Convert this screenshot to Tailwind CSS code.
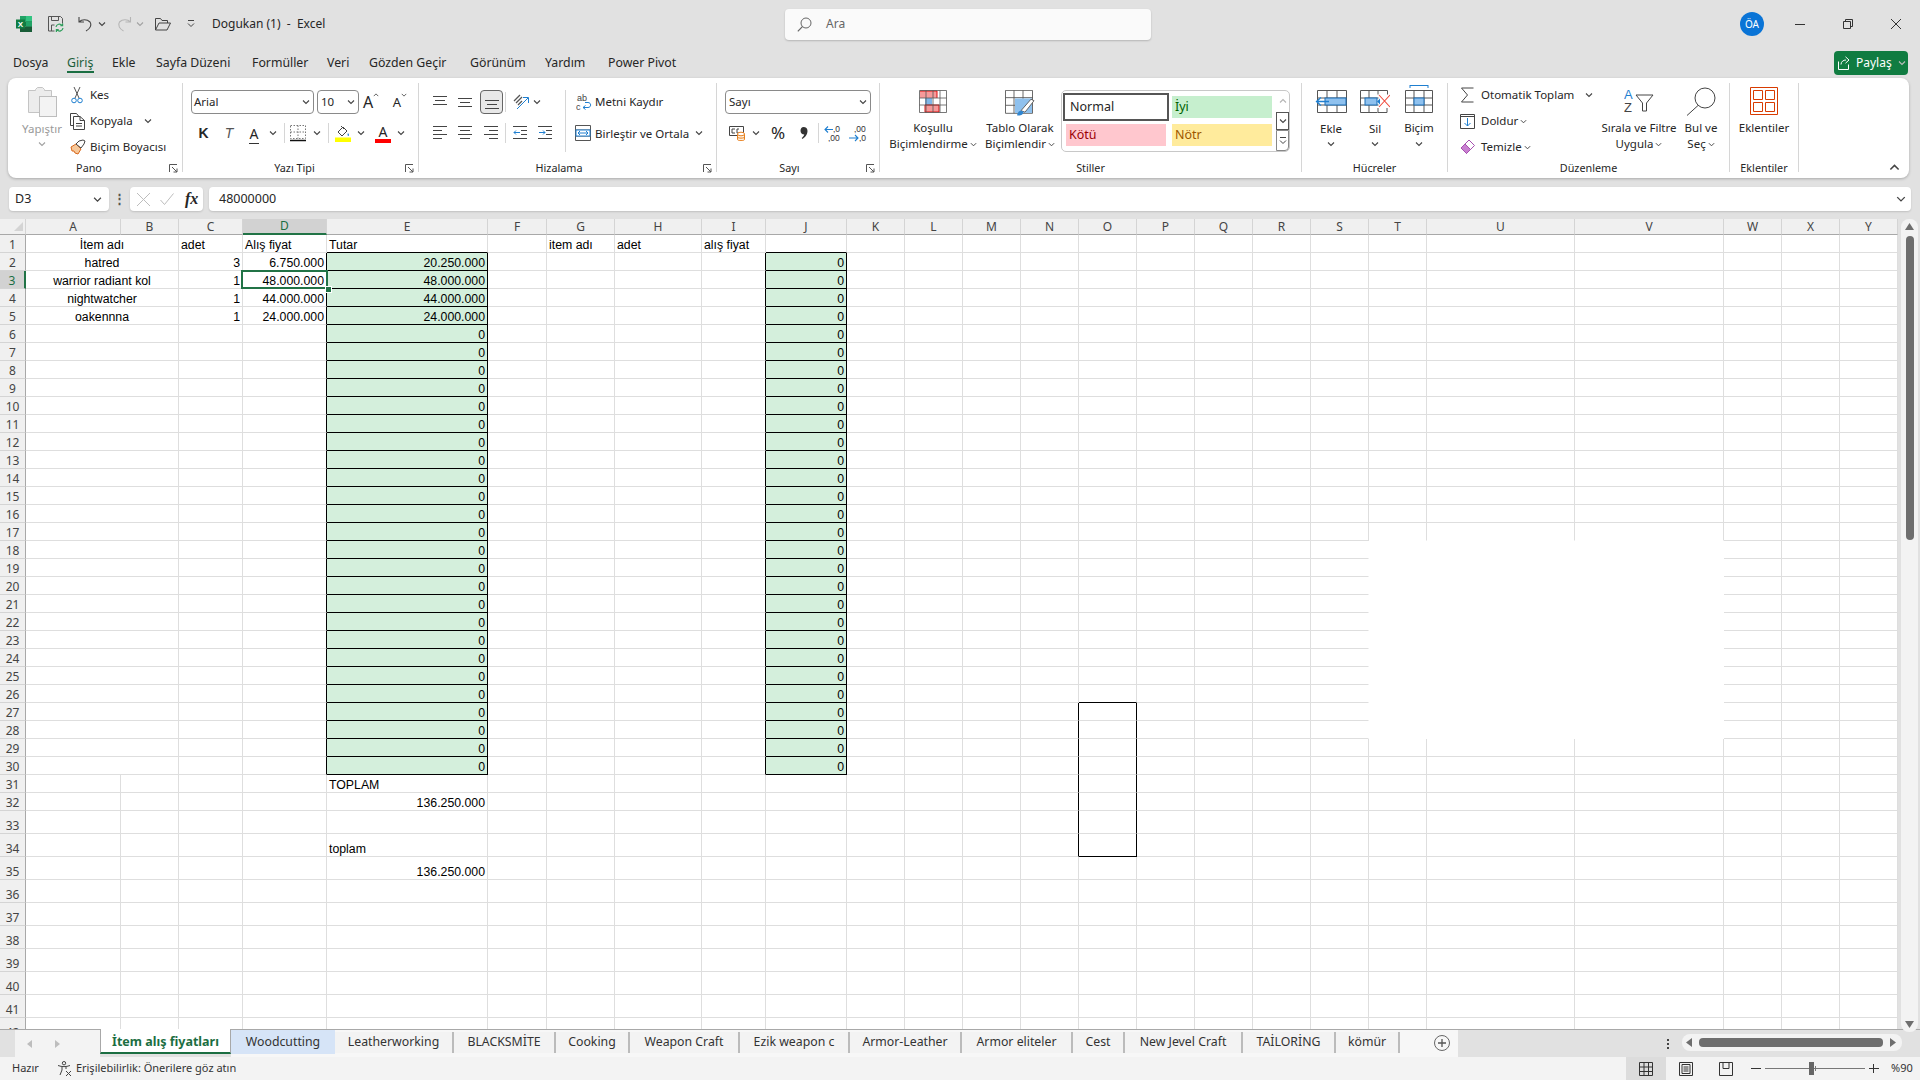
<!DOCTYPE html>
<html lang="tr">
<head>
<meta charset="UTF-8">
<title>Dogukan (1) - Excel</title>
<script src="https://cdn.jsdelivr.net/npm/@tailwindcss/browser@4"></script>
</head>
<body class="w-[1920px] h-[1080px] overflow-hidden bg-[#e1e1e1] text-[#262626] text-[12px] font-['Noto_Sans',sans-serif]">

<!-- shared icon parts -->
<svg class="hidden">
  <symbol id="chev" viewBox="0 0 8 8"><path d="M1 2.5 4 5.5 7 2.5" fill="none" stroke="#444" stroke-width="1.1"/></symbol>
  <symbol id="launch" viewBox="0 0 9 9"><path d="M.5 8V.5H8M3 3l5 5M8 4.5V8H4.5" fill="none" stroke="#555"/></symbol>
</svg>

<!-- title bar -->
<div class="h-[48px] flex items-center">
  <svg class="ml-[16px] w-[16px] h-[16px]" viewBox="0 0 16 16">
    <rect x="4" y="0" width="12" height="5.4" fill="#21a366"/><rect x="10" y="0" width="6" height="5.4" fill="#33c481"/>
    <rect x="4" y="5.3" width="12" height="5.4" fill="#107c41"/><rect x="10" y="5.3" width="6" height="5.4" fill="#21a366"/>
    <rect x="4" y="10.6" width="12" height="5.4" fill="#185c37"/><rect x="0" y="3.5" width="9" height="9" fill="#107c41"/>
    <text x="4.5" y="10.8" text-anchor="middle" font-size="8" font-weight="700" fill="#fff" font-family="Liberation Sans">X</text>
  </svg>
  <svg class="ml-[16px] w-[16px] h-[16px]" viewBox="0 0 16 16">
    <path d="M.5.5h12l2 2v5M.5.5v14.5h6M3.5.5v4h7v-4M3.5 15V9h3" fill="none" stroke="#555"/>
    <path d="M8 11a3.4 3.4 0 0 1 6-1.6M15 12a3.4 3.4 0 0 1-6 1.8M14.6 7.5v2.2h-2.2M8.4 16v-2.3h2.3" fill="none" stroke="#2e9e5b" stroke-width="1.2"/>
  </svg>
  <svg class="ml-[14px] w-[14px] h-[16px]" viewBox="0 0 14 16"><path d="M1 1v5h5M1 6c3-3 8-3 11 0 2 3 0 7-4 9" fill="none" stroke="#444" stroke-width="1.1"/></svg>
  <svg class="ml-[6px] w-[8px] h-[8px]"><use href="#chev"/></svg>
  <svg class="ml-[11px] w-[15px] h-[16px]" viewBox="0 0 14 16"><path d="M13 1v5H8M13 6C10 3 5 3 2 6c-2 3 0 7 4 9" fill="none" stroke="#b5b5b5" stroke-width="1.1"/></svg>
  <svg class="ml-[4px] w-[8px] h-[8px] opacity-40"><use href="#chev"/></svg>
  <svg class="ml-[11px] w-[16px] h-[14px]" viewBox="0 0 16 14"><path d="M.5 13V1.5h5l1.5 2h5.500v2.500M.5 13h11.500l3.500-7H4L.5 13" fill="none" stroke="#444"/></svg>
  <svg class="ml-[16px] w-[8px] h-[10px]" viewBox="0 0 8 10"><path d="M1 1.500h6M1 4.500l3 3 3-3" fill="none" stroke="#444"/></svg>
  <div class="ml-[17px] w-[108px] whitespace-pre text-[12px]">Dogukan (1)  -  Excel</div>
  <div class="ml-[465px] w-[366px] h-[31px] bg-[#fafafa] rounded-[4px] shadow-[0_1px_2px_rgba(0,0,0,0.2)] flex items-center text-[#666]">
    <svg class="ml-[12px] w-[15px] h-[15px]" viewBox="0 0 15 15"><circle cx="9" cy="6" r="5" fill="none" stroke="#666"/><path d="M5.500 9.500.8 14.300" stroke="#666" stroke-width="1.100"/></svg>
    <span class="ml-[14px]">Ara</span>
  </div>
  <div class="ml-[589px] w-[24px] h-[24px] rounded-full bg-[#0a74d6] text-white text-[10px] flex items-center justify-center">ÖA</div>
  <svg class="ml-[31px] w-[10px] h-[10px]" viewBox="0 0 10 10"><path d="M0 5.500h10" stroke="#333"/></svg>
  <svg class="ml-[38px] w-[10px] h-[10px]" viewBox="0 0 10 10"><path d="M.5 2.500h7v7h-7zM2.500 2.500V.5h7v7H7.500" fill="none" stroke="#333"/></svg>
  <svg class="ml-[38px] w-[10px] h-[10px]" viewBox="0 0 10 10"><path d="M0 0l10 10M10 0 0 10" stroke="#333"/></svg>
</div>

<!-- menu row -->
<div class="h-[30px] flex items-center pl-[13px] text-[12.3px]">
  <div class="w-[54px] pt-[1px]">Dosya</div>
  <div class="w-[45px] pt-[1px] relative text-[#1b5e3a]">Giriş<div class="absolute left-0 top-[18px] w-[27px] h-[2px] bg-[#1b6e42]"></div></div>
  <div class="w-[44px] pt-[1px]">Ekle</div>
  <div class="w-[96px] pt-[1px]">Sayfa Düzeni</div>
  <div class="w-[75px] pt-[1px]">Formüller</div>
  <div class="w-[42px] pt-[1px]">Veri</div>
  <div class="w-[101px] pt-[1px]">Gözden Geçir</div>
  <div class="w-[75px] pt-[1px]">Görünüm</div>
  <div class="w-[63px] pt-[1px]">Yardım</div>
  <div class="w-[226px] pt-[1px]">Power Pivot</div>
  <div class="ml-[1000px] w-[74px] h-[24px] rounded-[4px] bg-[#107c41] text-white flex items-center">
    <svg class="ml-[4px] w-[14px] h-[14px]" viewBox="0 0 14 14"><path d="M.5 5.500v8h10v-5M3 8.500c0-3 2.500-4.500 5-4.500M7.500.8 11 4 7.500 7.200" fill="none" stroke="#fff"/></svg>
    <span class="ml-[4px] text-[12px]">Paylaş</span>
    <svg class="ml-[6px] w-[8px] h-[8px] invert"><use href="#chev"/></svg>
  </div>
</div>

<!-- ribbon -->
<div class="ml-[8px] w-[1901px] h-[100px] bg-white rounded-[8px] shadow-[0_1px_3px_rgba(0,0,0,0.25)] flex pt-[5px] text-[11.5px]">

  <!-- Pano -->
  <div class="w-[175px] h-[89px] border-r border-[#d6d6d6]">
    <div class="h-[79px] flex">
      <div class="w-[62px] pl-[6px] flex flex-col items-center text-[#9a9a9a]">
        <svg class="mt-[4px] w-[29px] h-[30px]" viewBox="0 0 29 30"><path d="M.5 3.500h7v-1l2-2h5l2 2v1h7v6H11.500v16H.5z" fill="#ececec" stroke="#c4c4c4"/><rect x="11.500" y="9.500" width="17" height="20" fill="#f3f3f3" stroke="#bdbdbd"/></svg>
        <div class="mt-[4px] leading-[16px]">Yapıştır</div>
        <svg class="mt-[3px] w-[8px] h-[8px] opacity-50"><use href="#chev"/></svg>
      </div>
      <div class="-mt-[1px] flex flex-col">
        <div class="h-[26px] flex items-center">
          <svg class="w-[14px] h-[18px]" viewBox="0 0 14 18"><path d="M4 1l5 11M10 1 5 12" fill="none" stroke="#555"/><circle cx="4" cy="14.500" r="2.300" fill="none" stroke="#1f7fd0"/><circle cx="10" cy="14.500" r="2.300" fill="none" stroke="#1f7fd0"/></svg>
          <span class="ml-[6px]">Kes</span>
        </div>
        <div class="h-[26px] flex items-center">
          <svg class="w-[15px] h-[17px]" viewBox="0 0 15 17"><path d="M3.500 12.500H.5V.5h6l2 2.500M3.500 3.500h6.500l4.500 4v9h-11zM10 3.500v4h4.500M6 10.500h6M6 13h6" fill="none" stroke="#444"/></svg>
          <span class="ml-[5px]">Kopyala</span>
          <svg class="ml-[11px] w-[8px] h-[8px]"><use href="#chev"/></svg>
        </div>
        <div class="h-[26px] flex items-center">
          <svg class="w-[16px] h-[16px]" viewBox="0 0 16 16"><path d="M1 8l5-3 5 5-3 5-3-1-1-2-2 0z" fill="#f7c89a" stroke="#d9691c"/><path d="M6 5l3-3 4-1 2 1-1 3-3 4z" fill="#fff" stroke="#444"/></svg>
          <span class="ml-[4px] whitespace-nowrap">Biçim Boyacısı</span>
        </div>
      </div>
    </div>
    <div class="h-[12px] leading-[12px] text-center text-[10.8px] relative pr-[12px]">Pano<svg class="absolute right-[4px] top-[2px] w-[9px] h-[9px]"><use href="#launch"/></svg></div>
  </div>

  <!-- Yazı Tipi -->
  <div class="w-[236px] h-[89px] border-r border-[#d6d6d6]">
    <div class="h-[79px] pt-[7px] flex flex-col gap-[7px]">
      <div class="h-[24px] flex items-center pl-[8px]">
        <div class="w-[123px] h-[24px] border border-[#8a8a8a] rounded-[4px] flex items-center justify-between px-[2px]"><span>Arial</span><svg class="mr-[1px] w-[8px] h-[8px]"><use href="#chev"/></svg></div>
        <div class="ml-[3px] w-[42px] h-[24px] border border-[#8a8a8a] rounded-[4px] flex items-center justify-between px-[3px]"><span>10</span><svg class="w-[8px] h-[8px]"><use href="#chev"/></svg></div>
        <div class="ml-[3px] w-[18px] flex items-start justify-center text-[16px] leading-[20px]">A<svg class="w-[6px] h-[6px] rotate-180"><use href="#chev"/></svg></div>
        <div class="ml-[11px] w-[18px] flex items-start justify-center text-[13px] leading-[20px]">A<svg class="w-[6px] h-[6px]"><use href="#chev"/></svg></div>
      </div>
      <div class="h-[24px] flex items-center pl-[8px]">
        <div class="w-[25px] text-center font-bold text-[14px] font-['Liberation_Sans',sans-serif]">K</div>
        <div class="w-[26px] text-center italic text-[14px] text-[#555] font-['Liberation_Sans',sans-serif]">T</div>
        <div class="w-[24px] text-center text-[14px] leading-[17px]"><span class="border-b border-[#333] px-[1px]">A</span></div>
        <svg class="ml-[3px] mr-[3px] w-[8px] h-[8px]"><use href="#chev"/></svg>
        <div class="ml-[4px] w-[1px] h-[20px] bg-[#d6d6d6]"></div>
        <svg class="ml-[5px] mr-[5px] w-[16px] h-[17px]" viewBox="0 0 16 17"><path d="M.5.5h15v13H.5zM8 .5v13M.5 7h15" fill="none" stroke="#777" stroke-dasharray="1.500 1.500"/><path d="M0 15.500h16" stroke="#111" stroke-width="1.500"/></svg>
        <svg class="ml-[2px] mr-[2px] w-[8px] h-[8px]"><use href="#chev"/></svg>
        <div class="ml-[5px] w-[1px] h-[20px] bg-[#d6d6d6]"></div>
        <svg class="ml-[6px] mr-[6px] w-[16px] h-[17px]" viewBox="0 0 16 17"><path d="M3 7l5-5 4 4-5 5zM6 1l3 3" fill="none" stroke="#444"/><path d="M13 8c1 1.500 1.500 2 .5 3-1 0-1.300-1.500-.5-3" fill="#1f7fd0"/><rect x="0" y="12.500" width="16" height="4.500" fill="#ffff00"/></svg>
        <svg class="mr-[1px] w-[8px] h-[8px]"><use href="#chev"/></svg>
        <div class="ml-[5px] w-[24px] flex flex-col items-center"><span class="text-[14px] leading-[15px]">A</span><div class="w-[16px] h-[4px] bg-[#ff0000]"></div></div>
        <svg class="ml-[2px] w-[8px] h-[8px]"><use href="#chev"/></svg>
      </div>
    </div>
    <div class="h-[12px] leading-[12px] text-center text-[10.8px] relative pr-[12px]">Yazı Tipi<svg class="absolute right-[4px] top-[2px] w-[9px] h-[9px]"><use href="#launch"/></svg></div>
  </div>

  <!-- Hizalama -->
  <div class="w-[298px] h-[89px] border-r border-[#d6d6d6]">
    <div class="h-[79px] pt-[7px] flex flex-col gap-[7px]">
      <div class="h-[24px] flex items-center pl-[9px]">
        <div class="w-[24px] flex justify-center"><svg class="w-[14px] h-[12px]" viewBox="0 0 14 12"><path d="M0 .5h14M2 4.500h10M0 8.500h14" stroke="#444"/></svg></div>
        <div class="ml-[1px] w-[24px] flex justify-center"><svg class="w-[14px] h-[12px]" viewBox="0 0 14 12"><path d="M0 2.500h14M2 6.500h10M0 10.500h14" stroke="#444"/></svg></div>
        <div class="ml-[3px] w-[23px] h-[24px] border border-[#666] bg-[#e8e8e8] rounded-[4px] flex items-center justify-center"><svg class="w-[14px] h-[14px]" viewBox="0 0 14 14"><path d="M0 5.500h14M2 9.500h10M0 13.500h14" stroke="#444"/></svg></div>
        <div class="ml-[2px] w-[1px] h-[20px] bg-[#d6d6d6]"></div>
        <div class="ml-[3px] w-[24px] flex justify-center"><svg class="w-[17px] h-[17px]" viewBox="0 0 17 17"><path d="M1 7l6-6M3 9l6-6M5 11l4-4" fill="none" stroke="#555" stroke-width="1.300"/><path d="M4 15 15 4M10 3.500h5.500V9" fill="none" stroke="#1f7fd0"/></svg></div>
        <svg class="w-[8px] h-[8px]"><use href="#chev"/></svg>
        <div class="ml-[24px] w-[1px] h-[62px] self-start bg-[#d6d6d6]"></div>
        <svg class="ml-[10px] w-[16px] h-[18px]" viewBox="0 0 16 18"><text x="1" y="8" font-size="9" fill="#444" font-family="Liberation Sans">ab</text><text x="0" y="17" font-size="9" fill="#444" font-family="Liberation Sans">c</text><path d="M7 14.500h5c3.500 0 3.500-5 0-5H9M9.500 12.500l-2.500 2 2.500 2" fill="none" stroke="#1f7fd0"/></svg>
        <span class="ml-[3px] whitespace-nowrap">Metni Kaydır</span>
      </div>
      <div class="h-[24px] flex items-center pl-[9px]">
        <div class="w-[24px] flex justify-center"><svg class="w-[14px] h-[14px]" viewBox="0 0 14 14"><path d="M0 .5h14M0 4.500h9M0 8.500h14M0 12.500h9" stroke="#444"/></svg></div>
        <div class="ml-[1px] w-[24px] flex justify-center"><svg class="w-[14px] h-[14px]" viewBox="0 0 14 14"><path d="M0 .5h14M2 4.500h10M0 8.500h14M2 12.500h10" stroke="#444"/></svg></div>
        <div class="ml-[2px] w-[24px] flex justify-center"><svg class="w-[14px] h-[14px]" viewBox="0 0 14 14"><path d="M0 .5h14M5 4.500h9M0 8.500h14M5 12.500h9" stroke="#444"/></svg></div>
        <div class="ml-[2px] w-[1px] h-[20px] bg-[#d6d6d6]"></div>
        <div class="ml-[3px] w-[22px] flex justify-center"><svg class="w-[14px] h-[14px]" viewBox="0 0 14 14"><path d="M0 .5h14M8 4.500h6M8 8.500h6M0 12.500h14" stroke="#444"/><path d="M7 6.500H1M3 4.500l-2 2 2 2" fill="none" stroke="#1f7fd0"/></svg></div>
        <div class="ml-[3px] w-[22px] flex justify-center"><svg class="w-[14px] h-[14px]" viewBox="0 0 14 14"><path d="M0 .5h14M8 4.500h6M8 8.500h6M0 12.500h14" stroke="#444"/><path d="M1 6.500h6M5 4.500l2 2-2 2" fill="none" stroke="#1f7fd0"/></svg></div>
        <div class="ml-[9px] w-[1px] h-[20px] invisible"></div>
        <svg class="ml-[9px] w-[16px] h-[16px]" viewBox="0 0 16 16"><path d="M.5.5h15v15H.5zM.5 5h15M.5 11h15" fill="none" stroke="#555"/><rect x="1" y="5" width="14" height="6" fill="#fff" stroke="#1f7fd0"/><path d="M3 8h10M5 6l-2 2 2 2M11 6l2 2-2 2" fill="none" stroke="#1f7fd0"/></svg>
        <span class="ml-[4px] pt-[2px] w-[100px] whitespace-nowrap">Birleştir ve Ortala</span>
        <svg class="w-[8px] h-[8px]"><use href="#chev"/></svg>
      </div>
    </div>
    <div class="h-[12px] leading-[12px] text-center text-[10.8px] relative pr-[17px]">Hizalama<svg class="absolute right-[4px] top-[2px] w-[9px] h-[9px]"><use href="#launch"/></svg></div>
  </div>

  <!-- Sayı -->
  <div class="w-[163px] h-[89px] border-r border-[#d6d6d6]">
    <div class="h-[79px] pt-[7px] flex flex-col gap-[7px]">
      <div class="h-[24px] flex items-center pl-[8px]">
        <div class="w-[146px] h-[24px] border border-[#8a8a8a] rounded-[4px] flex items-center justify-between px-[3px]"><span>Sayı</span><svg class="w-[8px] h-[8px]"><use href="#chev"/></svg></div>
      </div>
      <div class="h-[24px] flex items-center pl-[12px]">
        <svg class="w-[16px] h-[16px]" viewBox="0 0 16 16"><path d="M.5 1.500h14v9H.5z" fill="none" stroke="#444"/><path d="M6 4H3v4h3M10 4H8v4h2" fill="none" stroke="#444"/><path d="M8.500 9v5.500c0 1.500 7 1.500 7 0V9z" fill="#fdf0e0" stroke="#e8811f"/><ellipse cx="12" cy="9" rx="3.500" ry="1.800" fill="#fff" stroke="#e8811f"/><path d="M8.500 12c0 1.500 7 1.500 7 0" fill="none" stroke="#e8811f"/></svg>
        <svg class="ml-[7px] w-[8px] h-[8px]"><use href="#chev"/></svg>
        <div class="ml-[8px] w-[20px] text-center text-[17px] leading-[20px]">%</div>
        <svg class="ml-[10px] w-[12px] h-[16px]" viewBox="0 0 12 16"><path d="M5.500 2c2.500 0 4 1.500 4 4 0 3.500-2.500 6.500-5 8l-.8-1c1.300-1 2.300-2.200 2.600-3.500C4 9.500 2.500 8 2.500 5.800 2.500 3.500 3.800 2 5.500 2z" fill="#333"/></svg>
        <div class="ml-[8px] w-[1px] h-[20px] bg-[#d6d6d6]"></div>
        <svg class="ml-[5px] w-[18px] h-[18px]" viewBox="0 0 18 18"><text x="9" y="8" font-size="8.500" fill="#333" font-family="Liberation Sans">,0</text><text x="4" y="17" font-size="8.500" fill="#333" font-family="Liberation Sans">,00</text><path d="M9 5.500H1M4 2.500 1 5.500l3 3" fill="none" stroke="#1f7fd0" stroke-width="1.100"/></svg>
        <svg class="ml-[7px] w-[18px] h-[18px]" viewBox="0 0 18 18"><text x="5" y="8" font-size="8.500" fill="#333" font-family="Liberation Sans">,00</text><text x="10" y="17" font-size="8.500" fill="#333" font-family="Liberation Sans">,0</text><path d="M0 14h9M6 11l3 3-3 3" fill="none" stroke="#1f7fd0" stroke-width="1.100"/></svg>
      </div>
    </div>
    <div class="h-[12px] leading-[12px] text-center text-[10.8px] relative pr-[17px]">Sayı<svg class="absolute right-[4px] top-[2px] w-[9px] h-[9px]"><use href="#launch"/></svg></div>
  </div>

  <!-- Stiller -->
  <div class="w-[422px] h-[89px] border-r border-[#d6d6d6]">
    <div class="h-[79px] pt-[7px] flex items-start">
      <div class="ml-[13px] w-[80px] flex flex-col items-center">
        <svg class="h-[23px] w-[28px] mb-[7px]" viewBox="0 0 28 23"><rect x="1" y="1" width="17" height="7" fill="#f69a9a"/><rect x="6" y="15" width="14" height="7" fill="#f69a9a"/><rect x="6" y="8" width="7" height="7" fill="#7fb6e8"/><path d="M1 1h17v7M6 15h14v7H6z" fill="none" stroke="#d11"/><path d="M.5.5h27v22H.5zM.5 8h27M.5 15h27M7 .5v22M14 .5v22M21 .5v22" fill="none" stroke="#555" stroke-width=".8"/></svg>
        <div class="leading-[16px]">Koşullu</div>
        <div class="leading-[16px] flex items-center whitespace-nowrap">Biçimlendirme<svg class="ml-[2px] w-[7px] h-[7px]"><use href="#chev"/></svg></div>
      </div>
      <div class="ml-[6px] w-[82px] flex flex-col items-center">
        <svg class="h-[26px] w-[30px] mb-[4px]" viewBox="0 0 30 34" preserveAspectRatio="none"><path d="M.5.5h27v30H.5zM.5 10h27M.5 20h27M9 .5v30M18 .5v30" fill="none" stroke="#555"/><rect x="10" y="11" width="17" height="19" fill="#8fc1ee"/><path d="M16 27 26 12l3 2-9 15z" fill="#fff" stroke="#555"/><path d="M12 33c1-6 4-7 6-5 1 4-3 6-6 5z" fill="#2f85d0"/></svg>
        <div class="leading-[16px]">Tablo Olarak</div>
        <div class="leading-[16px] flex items-center whitespace-nowrap">Biçimlendir<svg class="ml-[2px] w-[7px] h-[7px]"><use href="#chev"/></svg></div>
      </div>
      <div class="w-[229px] h-[62px] border border-[#c8c8c8] rounded-[5px] flex">
        <div class="w-[213px] pt-[2px] pl-[1px] grid grid-cols-[106px_106px] grid-rows-[28px_28px] text-[12.5px]">
          <div class="border-2 border-[#555] bg-white flex items-center pl-[5px]">Normal</div>
          <div class="p-[3px]"><div class="h-full bg-[#c6efce] text-[#006100] flex items-center pl-[3px]">İyi</div></div>
          <div class="p-[3px]"><div class="h-full bg-[#ffc7ce] text-[#9c0006] flex items-center pl-[3px]">Kötü</div></div>
          <div class="p-[3px]"><div class="h-full bg-[#ffeb9c] text-[#9c5700] flex items-center pl-[3px]">Nötr</div></div>
        </div>
        <div class="ml-[1px] w-[13px] flex flex-col">
          <div class="h-[21px] flex items-center justify-center"><svg class="w-[8px] h-[8px] rotate-180 opacity-40"><use href="#chev"/></svg></div>
          <div class="h-[19px] border border-[#555] flex items-center justify-center"><svg class="w-[8px] h-[8px]"><use href="#chev"/></svg></div>
          <div class="h-[21px] border border-[#888] rounded-br-[4px] flex items-center justify-center"><svg class="w-[8px] h-[10px]" viewBox="0 0 8 10"><path d="M1 1.500h6M1 4.500l3 3 3-3" fill="none" stroke="#444"/></svg></div>
        </div>
      </div>
    </div>
    <div class="h-[12px] leading-[12px] text-center text-[10.8px]">Stiller</div>
  </div>

  <!-- Hücreler -->
  <div class="w-[146px] h-[89px] border-r border-[#d6d6d6]">
    <div class="h-[79px] pt-[7px] pl-[7px] flex items-start">
      <div class="w-[44px] flex flex-col items-center">
        <svg class="w-[32px] h-[23px] mb-[8px]" viewBox="0 0 32 23"><path d="M2.500.5h29v22h-29zM2.500 8h29M2.500 15h29M12 .5v22M22 .5v22" fill="none" stroke="#555"/><rect x="10" y="8" width="21" height="7" fill="#8fc1ee" stroke="#1b6fb8"/><path d="M14 11.500H2M6 7.500l-4.500 4 4.500 4" fill="#fff" stroke="#1f7fd0" stroke-width="1.300"/></svg>
        <div class="leading-[16px]">Ekle</div>
        <svg class="mt-[3px] w-[8px] h-[8px]"><use href="#chev"/></svg>
      </div>
      <div class="w-[44px] flex flex-col items-center">
        <svg class="w-[30px] h-[23px] mb-[8px]" viewBox="0 0 30 23"><path d="M.5.5h27v4M.5.5v22h17M.5 8h18M.5 15h18M9 .5v22M18 .5v4M18 18v4.500M27 18v4.500h-9" fill="none" stroke="#555"/><rect x="5" y="8" width="12" height="7" fill="#8fc1ee" stroke="#1b6fb8"/><path d="M17 11.500l3-3v6z" fill="#1f7fd0"/><path d="M19 5l11 12M30 5 19 17" stroke="#f04a3c" stroke-width="1.100"/></svg>
        <div class="leading-[16px]">Sil</div>
        <svg class="mt-[3px] w-[8px] h-[8px]"><use href="#chev"/></svg>
      </div>
      <div class="w-[44px] -mt-[5px] flex flex-col items-center">
        <svg class="w-[28px] h-[28px] mb-[7px]" viewBox="0 0 28 28"><path d="M5 .5h18M5 0v3M23 0v3" stroke="#1f7fd0"/><path d="M.5 5.500h27v22H.5zM.5 13h27M.5 20h27M9 5.500v22M19 5.500v22" fill="none" stroke="#555"/><rect x="9" y="13" width="10" height="7" fill="#8fc1ee" stroke="#1b6fb8"/></svg>
        <div class="leading-[16px]">Biçim</div>
        <svg class="mt-[4px] w-[8px] h-[8px]"><use href="#chev"/></svg>
      </div>
    </div>
    <div class="h-[12px] leading-[12px] text-center text-[10.8px]">Hücreler</div>
  </div>

  <!-- Düzenleme -->
  <div class="w-[282px] h-[89px] border-r border-[#d6d6d6]">
    <div class="h-[79px] flex">
      <div class="w-[151px] pl-[12px] -mt-[1px] flex flex-col">
        <div class="h-[26px] flex items-center">
          <svg class="w-[15px] h-[16px]" viewBox="0 0 15 16"><path d="M13.500 1H1.500l6 7-6 7h12" fill="none" stroke="#444"/></svg>
          <span class="ml-[6px] whitespace-nowrap">Otomatik Toplam</span>
          <svg class="ml-[11px] w-[8px] h-[8px]"><use href="#chev"/></svg>
        </div>
        <div class="h-[26px] flex items-center">
          <svg class="w-[15px] h-[15px]" viewBox="0 0 15 15"><path d="M.5.500h14v14H.5zM.5 2.500h14" fill="none" stroke="#444"/><path d="M7.500 4v8M4.500 9l3 3 3-3" fill="none" stroke="#1f7fd0"/></svg>
          <span class="ml-[6px]">Doldur</span>
          <svg class="ml-[2px] w-[7px] h-[7px]"><use href="#chev"/></svg>
        </div>
        <div class="h-[26px] flex items-center">
          <svg class="w-[15px] h-[16px]" viewBox="0 0 15 16"><path d="M9 1l5.500 5.500-8 8L1 9z" fill="#fff" stroke="#a64fb0"/><path d="M5 5l5.500 5.500L6.500 14.500 1 9z" fill="#c97fd1" stroke="#a64fb0"/></svg>
          <span class="ml-[6px]">Temizle</span>
          <svg class="ml-[2px] w-[7px] h-[7px]"><use href="#chev"/></svg>
        </div>
      </div>
      <div class="w-[80px] pt-[4px] flex flex-col items-center">
        <svg class="w-[30px] h-[27px] mb-[6px]" viewBox="0 0 30 27"><text x="0" y="12" font-size="13" fill="#1f7fd0" font-family="Liberation Sans">A</text><text x="0" y="25" font-size="13" fill="#444" font-family="Liberation Sans">Z</text><path d="M12 8h17l-6.500 8v8h-4v-8z" fill="none" stroke="#444"/></svg>
        <div class="leading-[16px] whitespace-nowrap">Sırala ve Filtre</div>
        <div class="leading-[16px] flex items-center">Uygula<svg class="ml-[2px] w-[7px] h-[7px]"><use href="#chev"/></svg></div>
      </div>
      <div class="w-[44px] pt-[4px] flex flex-col items-center">
        <svg class="w-[30px] h-[29px] mb-[4px]" viewBox="0 0 30 29"><circle cx="19" cy="11" r="10" fill="none" stroke="#444"/><path d="M12 18.500 1 28.500" stroke="#444"/></svg>
        <div class="leading-[16px]">Bul ve</div>
        <div class="leading-[16px] flex items-center">Seç<svg class="ml-[2px] w-[7px] h-[7px]"><use href="#chev"/></svg></div>
      </div>
    </div>
    <div class="h-[12px] leading-[12px] text-center text-[10.8px]">Düzenleme</div>
  </div>

  <!-- Eklentiler -->
  <div class="w-[69px] h-[89px] border-r border-[#d6d6d6]">
    <div class="h-[79px] pt-[4px] flex flex-col items-center">
      <svg class="w-[28px] h-[28px] mb-[5px]" viewBox="0 0 28 28"><path d="M.5.5h27v27H.5zM3.500 3.500h9v9h-9zM15.500 3.500h9v9h-9zM3.500 15.500h9v9h-9zM15.500 15.500h9v9h-9z" fill="none" stroke="#d83b01"/></svg>
      <div class="leading-[16px]">Eklentiler</div>
    </div>
    <div class="h-[12px] leading-[12px] text-center text-[10.8px]">Eklentiler</div>
  </div>

  <div class="flex-1 flex justify-end items-end">
    <svg class="mr-[9px] mb-[5px] w-[11px] h-[11px] rotate-180"><use href="#chev"/></svg>
  </div>
</div>

<!-- formula bar -->
<div class="mt-[9px] h-[24px] flex">
  <div class="ml-[9px] w-[100px] bg-white rounded-[4px] shadow-[0_1px_2px_rgba(0,0,0,0.15)] flex items-center justify-between pl-[6px] pr-[7px]"><span class="text-[12.5px]">D3</span><svg class="w-[9px] h-[9px]"><use href="#chev"/></svg></div>
  <div class="w-[21px] flex items-center justify-center text-[13px] font-bold text-[#555]">⋮</div>
  <div class="w-[73px] bg-white rounded-[4px] shadow-[0_1px_2px_rgba(0,0,0,0.15)] flex items-center">
    <svg class="ml-[7px] w-[13px] h-[13px]" viewBox="0 0 13 13"><path d="M0 0l13 13M13 0 0 13" stroke="#bdbdbd"/></svg>
    <svg class="ml-[10px] w-[14px] h-[12px]" viewBox="0 0 14 12"><path d="M.5 7l4 4.500L13.500.5" fill="none" stroke="#bdbdbd"/></svg>
    <span class="ml-[11px] italic font-bold text-[16px] font-['Liberation_Serif',serif]">fx</span>
  </div>
  <div class="ml-[6px] w-[1702px] bg-white rounded-[4px] shadow-[0_1px_2px_rgba(0,0,0,0.15)] flex items-center justify-between pl-[10px] pr-[5px]"><span class="text-[12.5px]">48000000</span><svg class="w-[10px] h-[10px]"><use href="#chev"/></svg></div>
</div>

<!-- sheet -->
<div class="mt-[8px] h-[810px] flex">
  <div class="relative w-[1898px] h-[810px] overflow-hidden bg-white">
    <table id="sheet" class="table-fixed w-[1898px] border-separate border-spacing-0 font-['Liberation_Sans',sans-serif] text-[12.3px] text-black"></table>
    <svg class="absolute left-[14px] top-[3px] w-[9px] h-[9px]" viewBox="0 0 9 9"><path d="M9 0v9H0z" fill="#d4d4d4"/></svg>
    <div class="absolute left-[241px] top-[51px] w-[87px] h-[19px] border-2 border-[#217346]"></div>
    <div class="absolute left-[325px] top-[67px] w-[5px] h-[5px] bg-[#217346] border border-white box-content"></div>
  </div>
  <div class="ml-[3px] w-[17px] h-[813px] relative z-10 bg-[#f3f3f3] rounded-[8px] flex flex-col items-center">
    <svg class="mt-[4px] w-[9px] h-[7px]" viewBox="0 0 9 7"><path d="M4.500 0 9 7H0z" fill="#6e6e6e"/></svg>
    <div class="mt-[6px] w-[8px] h-[304px] bg-[#6e6e6e] rounded-[4px]"></div>
    <svg class="mt-auto mb-[4px] w-[9px] h-[7px]" viewBox="0 0 9 7"><path d="M4.500 7 9 0H0z" fill="#6e6e6e"/></svg>
  </div>
</div>

<!-- tabs -->
<div class="h-[28px] flex border-t border-[#a8a8a8] text-[12.3px]">
  <div class="ml-[15px] w-[85px] bg-[#f3f3f3] flex items-center">
    <svg class="ml-[12px] w-[5px] h-[8px]" viewBox="0 0 5 8"><path d="M5 0v8L0 4z" fill="#bdbdbd"/></svg>
    <svg class="ml-[23px] w-[5px] h-[8px]" viewBox="0 0 5 8"><path d="M0 0v8l5-4z" fill="#bdbdbd"/></svg>
  </div>
  <div class="-mt-[1px] pt-[3px] w-[131px] h-[25px] bg-white border-x border-[#a8a8a8] border-b-2 border-b-[#1b6e42] flex items-center justify-center font-bold text-[12.5px] text-[#1b6e42]">İtem alış fiyatları</div>
  <div class="flex-none w-[1227px] flex items-start bg-[#f7f7f7] text-[#333]">
    <div class="w-[104px] h-[24px] pt-[1px] bg-[#d6e4f7] flex items-center justify-center">Woodcutting</div>
    <div class="flex items-center h-[21px] mt-[2px]">
      <div class="w-[119px] h-full border-r-2 border-[#bbb] bg-[#f3f3f3] flex items-center justify-center">Leatherworking</div>
      <div class="w-[102px] h-full border-r-2 border-[#bbb] bg-[#f3f3f3] flex items-center justify-center">BLACKSMİTE</div>
      <div class="w-[74px] h-full border-r-2 border-[#bbb] bg-[#f3f3f3] flex items-center justify-center">Cooking</div>
      <div class="w-[110px] h-full border-r-2 border-[#bbb] bg-[#f3f3f3] flex items-center justify-center">Weapon Craft</div>
      <div class="w-[110px] h-full border-r-2 border-[#bbb] bg-[#f3f3f3] flex items-center justify-center">Ezik weapon c</div>
      <div class="w-[112px] h-full border-r-2 border-[#bbb] bg-[#f3f3f3] flex items-center justify-center">Armor-Leather</div>
      <div class="w-[111px] h-full border-r-2 border-[#bbb] bg-[#f3f3f3] flex items-center justify-center">Armor eliteler</div>
      <div class="w-[52px] h-full border-r-2 border-[#bbb] bg-[#f3f3f3] flex items-center justify-center">Cest</div>
      <div class="w-[118px] h-full border-r-2 border-[#bbb] bg-[#f3f3f3] flex items-center justify-center">New Jevel Craft</div>
      <div class="w-[93px] h-full border-r-2 border-[#bbb] bg-[#f3f3f3] flex items-center justify-center">TAİLORİNG</div>
      <div class="w-[64px] h-full border-r-2 border-[#bbb] bg-[#f3f3f3] flex items-center justify-center">kömür</div>
      <svg class="ml-[34px] w-[16px] h-[16px]" viewBox="0 0 16 16"><circle cx="8" cy="8" r="7.500" fill="none" stroke="#666"/><path d="M8 4v8M4 8h8" stroke="#555" stroke-width="1.300"/></svg>
    </div>
  </div>
  <div class="ml-[209px] mt-[9px] w-[2px] h-[10px] flex flex-col justify-between">
    <div class="h-[2px] bg-[#444]"></div><div class="h-[2px] bg-[#444]"></div><div class="h-[2px] bg-[#444]"></div>
  </div>
  <div class="ml-[13px] mt-[4px] w-[220px] h-[17px] bg-[#f3f3f3] rounded-[8px] flex items-center">
    <svg class="ml-[4px] w-[6px] h-[9px]" viewBox="0 0 6 9"><path d="M6 0v9L0 4.500z" fill="#6e6e6e"/></svg>
    <div class="ml-[7px] w-[184px] h-[9px] bg-[#6e6e6e] rounded-[4px]"></div>
    <svg class="ml-[7px] w-[6px] h-[9px]" viewBox="0 0 6 9"><path d="M0 0v9l6-4.500z" fill="#6e6e6e"/></svg>
  </div>
</div>

<!-- status bar -->
<div class="h-[23px] bg-[#f3f3f3] flex items-center text-[11px] text-[#333]">
  <span class="ml-[12px]">Hazır</span>
  <svg class="ml-[18px] w-[15px] h-[15px]" viewBox="0 0 15 15"><circle cx="7" cy="2.200" r="1.700" fill="none" stroke="#444"/><path d="M1 4.500c4 1.500 8 1.500 12 0M5 6v3L3 14M9 6v2" fill="none" stroke="#444"/><path d="M9 10l5 5M14 10l-5 5" stroke="#444"/></svg>
  <span class="ml-[4px] whitespace-nowrap">Erişilebilirlik: Önerilere göz atın</span>
  <div class="ml-auto flex items-center h-full">
    <div class="w-[40px] h-full bg-[#dcdcdc] flex items-center justify-center"><svg class="w-[14px] h-[14px]" viewBox="0 0 14 14"><path d="M.5.5h13v13H.5zM.5 5h13M.5 9.500h13M5 .5v13M9.500.5v13" fill="none" stroke="#333"/></svg></div>
    <div class="w-[40px] h-full flex items-center justify-center"><svg class="w-[14px] h-[14px]" viewBox="0 0 14 14"><path d="M.5.5h13v13H.5zM3 2.500h8v9H3zM4.500 5h5M4.500 7h5M4.500 9h5" fill="none" stroke="#333"/></svg></div>
    <div class="w-[40px] h-full flex items-center justify-center"><svg class="w-[14px] h-[14px]" viewBox="0 0 14 14"><path d="M.5.5h13v13H.5zM4 .5v6h6v-6" fill="none" stroke="#333"/></svg></div>
    <div class="ml-[5px] w-[10px] h-[1px] bg-[#333]"></div>
    <div class="ml-[4px] w-[100px] h-[1px] bg-[#777] relative"><div class="absolute left-[44px] -top-[6px] w-[5px] h-[13px] bg-[#666]"></div><div class="absolute left-[50px] -top-[2px] w-[1px] h-[5px] bg-[#777]"></div></div>
    <div class="ml-[4px] w-[10px] h-[10px] relative"><div class="absolute top-[4px] w-[10px] h-[1px] bg-[#333]"></div><div class="absolute left-[4px] w-[1px] h-[9px] bg-[#333]"></div></div>
    <span class="ml-[12px] w-[29px]">%90</span>
  </div>
</div>

<script>
  // column right edges, in px of the window
  const colEdges = [25, 120, 178, 242, 326, 487, 546, 614, 701, 765, 846, 904, 962, 1020, 1078, 1136, 1194, 1252, 1310, 1368, 1426, 1574, 1723, 1781, 1839, 1897];
  const colNames = ' ABCDEFGHIJKLMNOPQRSTUVWXY'.split('');

  const cells = {
    A1: 'İtem adı', C1: 'adet', D1: 'Alış fiyat', E1: 'Tutar', G1: 'item adı', H1: 'adet', I1: 'alış fiyat',
    A2: 'hatred', C2: '3', D2: '6.750.000', E2: '20.250.000',
    A3: 'warrior radiant kol', C3: '1', D3: '48.000.000', E3: '48.000.000',
    A4: 'nightwatcher', C4: '1', D4: '44.000.000', E4: '44.000.000',
    A5: 'oakennna', C5: '1', D5: '24.000.000', E5: '24.000.000',
    E31: 'TOPLAM', E32: '136.250.000', E34: 'toplam', E35: '136.250.000'
  };
  for (let r = 2; r <= 30; r++) {
    if (r > 5) cells['E' + r] = '0';
    cells['J' + r] = '0';
  }

  const table = document.getElementById('sheet');
  let html = '<colgroup>';
  colEdges.forEach((edge, i) => {
    const w = i === 0 ? edge + 1 : edge - colEdges[i - 1];
    html += `<col style="width:${w}px">`;
  });
  html += '</colgroup>';

  // header row
  html += '<tr style="height:16px">';
  colNames.forEach((name) => {
    const cls = name === 'D'
      ? 'bg-[#d2d2d2] text-[#1b6e42] border-b-2 border-b-[#217346]'
      : 'bg-[#f0f0f0] text-[#444] border-b border-b-[#a8a8a8]';
    html += `<th class="p-0 font-normal text-center border-r border-r-[#d4d4d4] text-[12px] leading-[14px] font-['Noto_Sans',sans-serif] ${cls}">${name}</th>`;
  });
  html += '</tr>';

  const isFilled = (c, r) => (c === 'E' || c === 'J') && r >= 2 && r <= 30;
  const isWhite = (c, r) => 'TUV'.includes(c) && r >= 18 && r <= 28;
  const inBox = (c, r) => c === 'O' && r >= 27 && r <= 34;

  for (let r = 1; r <= 42; r++) {
    const h = r <= 32 ? 18 : 23;
    html += `<tr style="height:${h}px">`;
    const headCls = r === 3
      ? 'bg-[#d2d2d2] text-[#1b6e42] border-r-2 border-r-[#217346]'
      : 'bg-[#f0f0f0] text-[#444] border-r border-r-[#a8a8a8]';
    html += `<th class="p-0 font-normal text-center border-b border-b-[#d4d4d4] text-[12px] leading-[14px] align-bottom font-['Noto_Sans',sans-serif] ${headCls}">${r}</th>`;

    for (let i = 1; i < colNames.length; i++) {
      const c = colNames[i];
      if (c === 'B' && r <= 30) continue; // A:B merged down to row 30
      const next = colNames[i + 1];
      const blackRight = isFilled(c, r) || (next && isFilled(next, r)) || inBox(c, r) || (next && inBox(next, r));
      const blackBottom = isFilled(c, r) || (r < 30 && isFilled(c, r + 1)) || (c === 'O' && (r === 26 || r === 34));
      const noRight = isWhite(c, r) || (c === 'S' && r >= 18 && r <= 28);
      const noBottom = isWhite(c, r) || ('TUV'.includes(c) && r === 17);

      const right = blackRight ? 'border-r border-r-black' : noRight ? 'border-r border-r-white' : 'border-r border-r-[#dedede]';
      const bottom = blackBottom ? 'border-b border-b-black' : noBottom ? 'border-b border-b-white' : 'border-b border-b-[#dedede]';
      const fill = isFilled(c, r) ? 'bg-[#d4efdc]' : 'bg-white';

      const text = cells[c + r] || '';
      let align = 'text-left pl-[2px]';
      if (c === 'A') align = 'text-center';
      else if (/^[0-9.]+$/.test(text)) align = 'text-right pr-[2px]';

      const span = c === 'A' && r <= 30 ? ' colspan="2"' : '';
      html += `<td${span} class="p-0 align-bottom whitespace-nowrap overflow-hidden leading-[14px] ${right} ${bottom} ${fill} ${align}">${text}</td>`;
    }
    html += '</tr>';
  }
  table.innerHTML = html;
</script>
</body>
</html>
